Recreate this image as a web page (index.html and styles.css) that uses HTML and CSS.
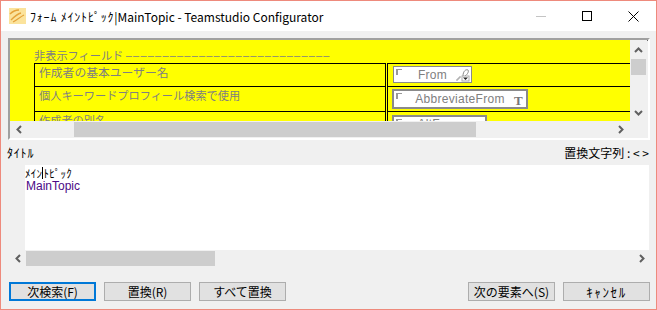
FILE: index.html
```html
<!DOCTYPE html>
<html lang="ja">
<head>
    <meta charset="UTF-8" />
    <title>Teamstudio Configurator</title>
    <link rel="stylesheet" href="styles.css">
</head>
<body>
    <div class="window">
        <div class="titlebar">
            <svg class="app-icon" width="17" height="16" viewBox="0 0 17 16">
                <rect x="0" y="0" width="17" height="16" fill="#fbe39c"/>
                <path d="M2 12 C5 9 8 6 12 5 M4 14 C8 12 11 9 15 7 M1 6 C4 3 7 2 10 2" stroke="#e4a23a" stroke-width="1.3" fill="none"/>
            </svg>
            <span class="title"><span class="hw">ﾌｫｰﾑ ﾒｲﾝﾄﾋﾟｯｸ</span>|MainTopic - Teamstudio Configurator</span>
            <div class="controls">
                <span class="ctl"><span class="min-line"></span></span>
                <span class="ctl"><span class="max-box"></span></span>
                <span class="ctl">
                    <svg width="11" height="11" viewBox="0 0 11 11"><path d="M0.5 0.5 L10.5 10.5 M10.5 0.5 L0.5 10.5" stroke="#000" stroke-width="1"/></svg>
                </span>
            </div>
        </div>

        <div class="main">
            <div class="panel">
                <div class="form-view">
                    <div class="hidden-head">非表示フィールド <span class="dashes">––––––––––––––––––––––––––––––––––––</span></div>
                    <table class="fields">
                        <tr class="r1">
                            <td class="lbl">作成者の基本ユーザー名</td>
                            <td class="val">
                                <div class="fbox box-from">From
                                    <svg class="ficon" width="14" height="14" viewBox="0 0 14 14">
                                        <path d="M1 13 L1 11 L3 11 L3 9 L5 9" stroke="#999" fill="none"/>
                                        <path d="M7 8 C7 3 10 1 12 2 C13 3 12 6 9 8" stroke="#888" fill="#fff"/>
                                        <rect x="6" y="8" width="7" height="5" fill="#fff" stroke="#aaa"/>
                                        <path d="M7 9.5 L12 9.5 L9.5 12 Z" fill="#222"/>
                                    </svg>
                                </div>
                            </td>
                        </tr>
                        <tr class="r2">
                            <td class="lbl">個人キーワードプロフィール検索で使用</td>
                            <td class="val">
                                <div class="fbox box-abbr">AbbreviateFrom<span class="t-icon">T</span></div>
                            </td>
                        </tr>
                        <tr class="r3">
                            <td class="lbl">作成者の別名</td>
                            <td class="val">
                                <div class="fbox box-alt">AltFrom</div>
                            </td>
                        </tr>
                    </table>
                </div>
                <div class="vscroll">
                    <svg class="arrow" width="9" height="6" viewBox="0 0 9 6"><path d="M1 5 L4.5 1.5 L8 5" stroke="#606060" stroke-width="2" fill="none"/></svg>
                    <div class="vthumb"></div>
                    <div class="spacer"></div>
                    <svg class="arrow" width="9" height="6" viewBox="0 0 9 6"><path d="M1 1 L4.5 4.5 L8 1" stroke="#606060" stroke-width="2" fill="none"/></svg>
                </div>
                <div class="hscroll">
                    <svg class="arrow" width="6" height="9" viewBox="0 0 6 9"><path d="M5 1 L1.5 4.5 L5 8" stroke="#606060" stroke-width="2" fill="none"/></svg>
                    <div class="hthumb thumb-top"></div>
                    <div class="spacer"></div>
                    <svg class="arrow" width="6" height="9" viewBox="0 0 6 9"><path d="M1 1 L4.5 4.5 L1 8" stroke="#606060" stroke-width="2" fill="none"/></svg>
                </div>
                <div class="corner"></div>
            </div>

            <div class="labels">
                <span class="hw">ﾀｲﾄﾙ</span>
                <span>置換文字列 : &lt; &gt;</span>
            </div>

            <div class="editor">
                <div class="gutter"></div>
                <div class="text">
                    <div class="kana">ﾒｲﾝ<span class="caret"></span>ﾄﾋﾟｯｸ</div>
                    <div class="latin">MainTopic</div>
                </div>
                <div class="hscroll edit-scroll">
                    <svg class="arrow" width="6" height="9" viewBox="0 0 6 9"><path d="M5 1 L1.5 4.5 L5 8" stroke="#606060" stroke-width="2" fill="none"/></svg>
                    <div class="hthumb thumb-edit"></div>
                    <div class="spacer"></div>
                    <svg class="arrow" width="6" height="9" viewBox="0 0 6 9"><path d="M1 1 L4.5 4.5 L1 8" stroke="#606060" stroke-width="2" fill="none"/></svg>
                </div>
            </div>

            <div class="buttons">
                <div class="group">
                    <button class="btn focus">次検索(F)</button>
                    <button class="btn">置換(R)</button>
                    <button class="btn">すべて置換</button>
                </div>
                <div class="group">
                    <button class="btn">次の要素へ(S)</button>
                    <button class="btn"><span class="hw wide">ｷｬﾝｾﾙ</span></button>
                </div>
            </div>
        </div>
    </div>
</body>
</html>
```

FILE: styles.css
```css
:root{
    --win-border: #ee8a7c;
    --face: #f0f0f0;
    --thumb: #cdcdcd;
    --yellow: #ffff00;
    --gray-text: #808080;
}

*{
    margin: 0;
    padding: 0;
    box-sizing: border-box;
}
body{
    background-color: #fff;
    font-family: "Noto Sans CJK JP", "Noto Sans", sans-serif;
    font-size: 12px;
}
.window{
    width: 657px;
    height: 310px;
    border: 1px solid var(--win-border);
    background-color: var(--face);
    overflow: hidden;
}
.titlebar{
    height: 30px;
    background-color: #fff;
    display: flex;
    align-items: center;
    padding-left: 8px;
}
.app-icon{
    margin-right: 4px;
}
.title{
    font-family: "Noto Sans CJK JP", "Noto Sans", sans-serif;
    font-size: 12px;
    color: #000;
}
.hw{
    letter-spacing: 0.8px;
}
.hw.wide{
    letter-spacing: 1.6px;
    font-size: 13px;
}
.controls{
    margin-left: auto;
    display: flex;
    height: 100%;
}
.ctl{
    width: 46px;
    height: 30px;
    display: flex;
    align-items: center;
    justify-content: center;
}
.min-line{
    width: 10px;
    height: 1px;
    background-color: #c4c4c4;
}
.max-box{
    width: 10px;
    height: 10px;
    border: 1px solid #000;
}

.main{
    padding: 7px 6px 0 7px;
}
.panel{
    height: 102px;
    border-top: 2px solid #a0a0a0;
    border-left: 2px solid #a0a0a0;
    border-right: 2px solid #fff;
    border-bottom: 2px solid #fff;
    box-shadow: inset 1px 1px 0 #696969;
    display: grid;
    grid-template-columns: 620px 17px;
    grid-template-rows: 81px 17px;
    background-color: var(--face);
}
.form-view{
    background-color: var(--yellow);
    overflow: hidden;
    padding: 8px 0 0 24px;
    color: var(--gray-text);
    font-size: 11.2px;
}
.hidden-head{
    height: 15px;
    line-height: 14px;
    white-space: nowrap;
}
.dashes{
    display: inline-block;
    width: 204px;
    overflow: hidden;
    vertical-align: top;
    font-family: "Liberation Sans", sans-serif;
    font-size: 11px;
    letter-spacing: 1.2px;
}
.fields{
    border-collapse: collapse;
    width: 640px;
}
.fields td{
    border-top: 1px solid #000;
    vertical-align: top;
}
.fields .lbl{
    width: 352px;
    border-left: 1px solid #000;
    padding: 1px 0 0 4px;
    line-height: 14px;
}
.r1 .lbl{
    font-size: 11.8px;
}
.fields .val{
    border-left: 3px double #000;
    padding: 2px 0 0 4px;
}
.r1 td{
    height: 23px;
}
.r2 td{
    height: 25px;
}
.r3 td{
    height: 25px;
}
.fbox{
    position: relative;
    background-color: #fff;
    border: 1px solid #8a8a8a;
    color: var(--gray-text);
    font-family: "Liberation Sans", sans-serif;
    font-size: 12px;
    letter-spacing: 0.3px;
    display: flex;
    align-items: center;
    justify-content: center;
}
.fbox::before{
    content: "";
    position: absolute;
    left: 2px;
    top: 2px;
    width: 4px;
    height: 5px;
    border-left: 2px solid #999;
    border-top: 1px solid #999;
}
.box-from{
    width: 79px;
    height: 17px;
    margin-left: 1px;
}
.ficon{
    position: absolute;
    right: 1px;
    bottom: 0;
}
.box-abbr{
    width: 136px;
    height: 20px;
    border-width: 2px;
}
.t-icon{
    position: absolute;
    right: 3px;
    top: 2px;
    font-family: "Liberation Serif", serif;
    font-weight: bold;
    font-size: 13px;
    color: #777;
}
.box-alt{
    width: 95px;
    height: 18px;
    border-width: 2px;
    margin-top: 1px;
}

.vscroll{
    background-color: var(--face);
    display: flex;
    flex-direction: column;
    align-items: center;
    padding: 7px 0 5px;
}
.vthumb{
    margin-top: 6px;
    width: 15px;
    height: 16px;
    background-color: var(--thumb);
}
.spacer{
    flex: 1;
}
.hscroll{
    display: flex;
    align-items: center;
    padding: 0 6px 0 6px;
    background-color: var(--face);
}
.hthumb{
    height: 15px;
    background-color: var(--thumb);
}
.thumb-top{
    margin-left: 52px;
    width: 402px;
}
.corner{
    background-color: var(--face);
}

.labels{
    display: flex;
    justify-content: space-between;
    height: 25px;
    padding: 5px 1px 0 0;
    margin-left: -1px;
    line-height: 15px;
    color: #000;
}

.editor{
    margin-left: 1px;
    width: 640px;
    display: grid;
    grid-template-columns: 16px 624px;
    grid-template-rows: 85px 17px;
}
.gutter{
    background-color: var(--face);
}
.text{
    background-color: #fff;
    padding-top: 2px;
}
.kana{
    font-size: 11px;
    line-height: 12px;
    color: #000;
    letter-spacing: 0.3px;
}
.caret{
    display: inline-block;
    width: 1px;
    height: 12px;
    background-color: #000;
    vertical-align: top;
}
.latin{
    font-family: "Liberation Sans", sans-serif;
    font-size: 12px;
    line-height: 14px;
    color: #4b0a86;
    padding-left: 1px;
}
.edit-scroll{
    grid-column: 1 / 3;
    padding: 0 4px 0 6px;
}
.thumb-edit{
    margin-left: 5px;
    width: 189px;
}

.buttons{
    display: flex;
    justify-content: space-between;
    margin-top: 15px;
    padding: 0 0 0 1px;
    width: 642px;
}
.group{
    display: flex;
    gap: 8px;
}
.btn{
    width: 87px;
    height: 19px;
    background-color: #e1e1e1;
    border: 1px solid #adadad;
    font-family: "Noto Sans CJK JP", sans-serif;
    font-size: 12px;
    line-height: 15px;
    color: #000;
}
.btn.focus{
    border: 2px solid #0078d7;
}
```
